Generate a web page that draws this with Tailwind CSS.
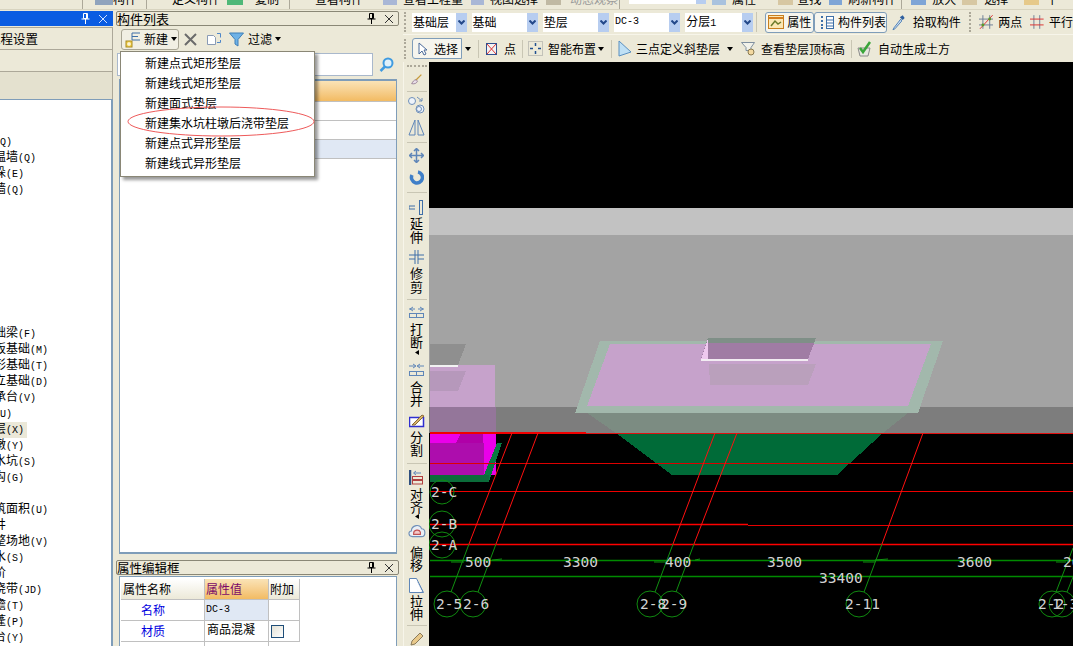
<!DOCTYPE html>
<html><head><meta charset="utf-8"><script src="https://cdn.jsdelivr.net/npm/@tailwindcss/browser@4"></script></head>
<body class="bg-[#ece9d8]">
<div class="relative w-[1073px] h-[646px] overflow-hidden flex flex-col bg-[#ece9d8] text-black text-[12px] leading-[16px] font-['Noto_Sans_CJK_SC',sans-serif]">

<!-- clipped top toolbar strip -->
<div class="h-[10px] shrink-0 flex items-start overflow-hidden border-b border-[#d8d4c0] text-[12px] leading-[12px] whitespace-nowrap">
  <div class="w-[83px] h-[9px] border-r border-[#aca899]"></div>
  <div class="ml-[12px] w-[18px] h-[5px] bg-[#8fa3bd]"></div>
  <span class="-mt-[7px]">构件</span>
  <div class="ml-[9px] w-px h-[9px] bg-[#aca899]"></div>
  <span class="ml-[25px] -mt-[7px]">定义构件</span>
  <div class="ml-[7px] w-[16px] h-[5px] bg-[#4fb878]"></div>
  <span class="ml-[12px] -mt-[7px]">复制</span>
  <div class="ml-[10px] w-px h-[9px] bg-[#aca899]"></div>
  <span class="ml-[25px] -mt-[7px]">查看构件</span>
  <div class="ml-[20px] w-[14px] h-[5px] bg-[#a9b7d6]"></div>
  <span class="ml-[6px] -mt-[7px]">查看工程量</span>
  <div class="ml-[8px] w-[13px] h-[5px] bg-[#a9b7d6]"></div>
  <span class="ml-[6px] -mt-[7px]">视图选择</span>
  <div class="ml-[8px] w-[15px] h-[5px] bg-[#c0b9a3]"></div>
  <span class="ml-[9px] -mt-[7px] text-[#9a9a9a]">动态观察</span>
  <div class="ml-[1px] w-px h-[9px] bg-[#aca899]"></div>
  <div class="ml-[9px] w-[67px] h-[4px] bg-white"></div>
  <div class="w-[10px] h-[4px] bg-[#b7cdf0]"></div>
  <div class="ml-[6px] w-[14px] h-[5px] bg-[#a9c2de]"></div>
  <span class="ml-[6px] -mt-[7px]">属性</span>
  <div class="ml-[22px] w-[15px] h-[5px] bg-[#d7c7a2]"></div>
  <span class="ml-[4px] -mt-[7px]">查找</span>
  <div class="ml-[8px] w-[13px] h-[5px] bg-[#7fa5d6]"></div>
  <span class="ml-[6px] -mt-[7px]">刷新构件</span>
  <div class="ml-[5px] w-px h-[9px] bg-[#aca899]"></div>
  <div class="ml-[9px] w-[15px] h-[5px] bg-[#7fa5d6]"></div>
  <span class="ml-[6px] -mt-[7px]">放大</span>
  <div class="ml-[6px] w-[15px] h-[5px] bg-[#d7c7a2]"></div>
  <span class="ml-[7px] -mt-[7px]">选择</span>
  <div class="ml-[16px] w-[15px] h-[5px] bg-[#e6c98a]"></div>
  <span class="ml-[7px] -mt-[7px]">平</span>
</div>

<div class="flex flex-1 min-h-0 pt-0">
  <!-- left panel -->
  <div class="w-[113px] flex flex-col shrink-0 overflow-hidden">
    <div class="mt-[1px] h-[15px] bg-[#0a5ce2] flex items-center justify-end gap-[9px] pr-[6px]">
      <svg width="9" height="11" viewBox="0 0 9 11" fill="none" stroke="#fff"><path d="M2.5.5h4v5h-4zM5.5 1v4M.5 6h8M4.5 6v5"/></svg>
      <svg width="8" height="8" viewBox="0 0 8 8" stroke="#cfe0ff"><path d="M0 0l8 8M8 0L0 8"/></svg>
    </div>
    <div class="h-[23px] mt-[1px] bg-[#ece9d8] border border-[#aca899] border-l-0 flex items-center whitespace-nowrap text-[12.5px]"><span class="-ml-[12px]">工程设置</span></div>
    <div class="h-[22px] bg-[#ece9d8] border-b border-r border-[#aca899] flex items-center whitespace-nowrap"><span class="-ml-[48px]">绘图输入</span></div>
    <div class="h-[27px] bg-[#e4e1cf] border-r border-[#aca899]"></div>
    <div class="flex-1 bg-white border-t border-r-2 border-[#7f9db9] overflow-hidden pt-[34px] whitespace-nowrap font-['Liberation_Mono','Noto_Sans_CJK_SC',monospace]">
      <div class="h-[16px] pl-[2px] -ml-[20px]">墙<span class="text-[10px]">(Q)</span></div>
      <div class="h-[16px] pl-[2px] -ml-[20px]">保温墙<span class="text-[10px]">(Q)</span></div>
      <div class="h-[16px] pl-[2px] -ml-[20px]">墙垛<span class="text-[10px]">(E)</span></div>
      <div class="h-[16px] pl-[2px] -ml-[20px]">幕墙<span class="text-[10px]">(Q)</span></div>
      <div class="h-[128px]"></div>
      <div class="h-[16px] pl-[2px] -ml-[20px]">基础梁<span class="text-[10px]">(F)</span></div>
      <div class="h-[16px] pl-[2px] -ml-[20px]">筏板基础<span class="text-[10px]">(M)</span></div>
      <div class="h-[16px] pl-[2px] -ml-[20px]">条形基础<span class="text-[10px]">(T)</span></div>
      <div class="h-[16px] pl-[2px] -ml-[20px]">独立基础<span class="text-[10px]">(D)</span></div>
      <div class="h-[16px] pl-[2px] -ml-[20px]">桩承台<span class="text-[10px]">(V)</span></div>
      <div class="h-[16px] pl-[2px] -ml-[20px]">桩<span class="text-[10px]">(U)</span></div>
      <div class="h-[16px] w-[47px] pl-[2px] -ml-[20px] bg-[#ebe8d8]">垫层<span class="text-[10px]">(X)</span></div>
      <div class="h-[16px] pl-[2px] -ml-[20px]">柱墩<span class="text-[10px]">(Y)</span></div>
      <div class="h-[16px] pl-[2px] -ml-[20px]">集水坑<span class="text-[10px]">(S)</span></div>
      <div class="h-[16px] pl-[2px] -ml-[20px]">地沟<span class="text-[10px]">(G)</span></div>
      <div class="h-[16px]"></div>
      <div class="h-[16px] pl-[2px] -ml-[20px]">建筑面积<span class="text-[10px]">(U)</span></div>
      <div class="h-[16px] pl-[2px] -ml-[20px]">天井</div>
      <div class="h-[16px] pl-[2px] -ml-[20px]">平整场地<span class="text-[10px]">(V)</span></div>
      <div class="h-[16px] pl-[2px] -ml-[20px]">散水<span class="text-[10px]">(S)</span></div>
      <div class="h-[16px] pl-[2px] -ml-[20px]">台阶</div>
      <div class="h-[16px] pl-[2px] -ml-[20px]">后浇带<span class="text-[10px]">(JD)</span></div>
      <div class="h-[16px] pl-[2px] -ml-[20px]">挑檐<span class="text-[10px]">(T)</span></div>
      <div class="h-[16px] pl-[2px] -ml-[20px]">雨蓬<span class="text-[10px]">(P)</span></div>
      <div class="h-[16px] pl-[2px] -ml-[20px]">阳台<span class="text-[10px]">(Y)</span></div>
    </div>
  </div>

  <!-- middle panel -->
  <div class="ml-[3px] w-[283px] shrink-0 flex flex-col">
    <div class="mt-[1px] h-[15px] border border-[#8a8776] rounded-[2px] flex items-center justify-between pr-[5px] text-[13px] whitespace-nowrap">
      <span>构件列表</span>
      <span class="flex items-center gap-[9px]">
        <svg width="9" height="11" viewBox="0 0 9 11" fill="none" stroke="#000"><path d="M2.5.5h4v5h-4zM5.5 1v4M.5 6h8M4.5 6v5"/></svg>
        <svg width="8" height="8" viewBox="0 0 8 8" stroke="#333"><path d="M0 0l8 8M8 0L0 8"/></svg>
      </span>
    </div>
    <div class="h-[26px] flex items-center pl-[5px]">
      <div class="h-[21px] w-[58px] border border-[#a8a594] rounded-[3px] flex items-center pl-[3px] bg-[#f1efe3]">
        <svg width="16" height="17" viewBox="0 0 16 17"><path d="M7 2v7M7 2h8M7 5.500h6M7 9h8" stroke="#3d6fa8" fill="none"/><rect x="1" y="10" width="6" height="6" fill="#f4d24e" stroke="#a88a20"/><path d="M4 11v4M2 13h4" stroke="#fff"/></svg>
        <span class="ml-[3px]">新建</span>
        <svg class="ml-[3px]" width="6" height="4" viewBox="0 0 6 4"><path d="M0 0h6L3 4z" fill="#000"/></svg>
      </div>
      <svg class="ml-[5px]" width="13" height="13" viewBox="0 0 13 13" stroke="#6b6b6b" stroke-width="2"><path d="M1 1l11 11M12 1L1 12"/></svg>
      <svg class="ml-[9px]" width="16" height="14" viewBox="0 0 16 14" fill="#fff" stroke="#8a9bb5"><path d="M1.500 3.500h6l2 2v7h-8z"/><path d="M11 1.500h3.500v4M14.500 8v2.500H11" stroke="#4f87c9" fill="none"/></svg>
      <svg class="ml-[7px]" width="15" height="15" viewBox="0 0 15 15"><path d="M.5 1h14L9 7.500V14l-3-2V7.500z" fill="#6fb2e6" stroke="#3f7fb8"/></svg>
      <span class="ml-[4px]">过滤</span>
      <svg class="ml-[3px]" width="6" height="4" viewBox="0 0 6 4"><path d="M0 0h6L3 4z" fill="#000"/></svg>
    </div>
    <div class="h-[25px] flex items-center pl-[1px]">
      <div class="w-[256px] h-[23px] bg-white border border-[#a9b8cc]"></div>
      <svg class="ml-[6px]" width="15" height="15" viewBox="0 0 15 15" fill="none" stroke="#3f9be0" stroke-width="2"><circle cx="9" cy="6" r="4.500" fill="#dff1fb"/><path d="M6 9.500L1.500 14" stroke-width="2.500"/></svg>
    </div>
    <div class="mt-[2px] ml-[3px] w-[278px] h-[475px] bg-white border-2 border-[#7f9db9] border-r border-l">
      <div class="h-[21px] bg-gradient-to-b from-[#fae3b6] to-[#f2bb62] border-b border-[#c0c0c0]"></div>
      <div class="h-[19px] border-b border-[#c0c0c0]"></div>
      <div class="h-[19px] border-b border-[#c0c0c0]"></div>
      <div class="h-[19px] bg-[#e0e8f4] border-b border-[#c0c0c0]"></div>
    </div>
    <div class="mt-[6px] h-[15px] border border-[#8a8776] rounded-[2px] flex items-center justify-between pr-[5px] text-[12.5px] whitespace-nowrap">
      <span>属性编辑框</span>
      <span class="flex items-center gap-[9px]">
        <svg width="9" height="11" viewBox="0 0 9 11" fill="none" stroke="#000"><path d="M2.5.5h4v5h-4zM5.5 1v4M.5 6h8M4.5 6v5"/></svg>
        <svg width="8" height="8" viewBox="0 0 8 8" stroke="#333"><path d="M0 0l8 8M8 0L0 8"/></svg>
      </span>
    </div>
    <div class="ml-[3px] mt-[1px] w-[278px] flex-1 bg-white border border-b-0 border-[#7f9db9] pl-[1px] pt-[2px] overflow-hidden">
      <div class="grid grid-cols-[84px_64px_31px] auto-rows-[21px] w-[179px]">
        <div class="bg-gradient-to-b from-white to-[#ece9d8] border-r border-b border-[#c0c0c0] flex items-center pl-[2px]">属性名称</div>
        <div class="bg-gradient-to-b from-[#fae3b6] to-[#f2bb62] border-r border-b border-[#c0c0c0] flex items-center pl-[1px] text-[#7a0a6a]">属性值</div>
        <div class="bg-gradient-to-b from-white to-[#ece9d8] border-r border-b border-[#c0c0c0] flex items-center pl-[1px]">附加</div>
        <div class="border-r border-b border-[#c0c0c0] flex items-center pl-[20px] text-[#0000e0]">名称</div>
        <div class="bg-[#e0e8f4] border-r border-b border-[#c0c0c0] flex items-center pl-[1px] text-[10px] font-['Liberation_Mono',monospace]">DC-3</div>
        <div class="border-r border-b border-[#c0c0c0]"></div>
        <div class="border-r border-b border-[#c0c0c0] flex items-center pl-[20px] text-[#0000e0]">材质</div>
        <div class="border-r border-b border-[#c0c0c0] pl-[2px] whitespace-nowrap overflow-hidden">商品混凝</div>
        <div class="border-r border-b border-[#c0c0c0] flex items-center pl-[2px]"><div class="w-[13px] h-[13px] border border-[#1f4e79] bg-gradient-to-br from-[#e4e2d6] to-white"></div></div>
        <div class="border-r border-[#c0c0c0]"></div>
        <div class="border-r border-[#c0c0c0]"></div>
        <div></div>
      </div>
    </div>
  </div>

  <!-- right column -->
  <div class="ml-[4px] flex-1 min-w-0 flex flex-col">
    <div class="h-[25px] flex items-center whitespace-nowrap border-b border-[#f7f5ea]">
      <div class="w-[3px] h-[20px] border-l-2 border-dotted border-[#aca899] ml-[1px]"></div>
      <div class="ml-[5px] w-[56px] h-[19px] bg-white flex items-center justify-between pl-[1px]">基础层<div class="w-[11px] h-[19px] bg-[#b7cdf0] flex items-center justify-center"><svg width="7" height="5" viewBox="0 0 7 5" fill="none" stroke="#24498a" stroke-width="2"><path d="M.5.5l3 3 3-3"/></svg></div></div>
      <div class="ml-[5px] w-[68px] h-[19px] bg-white flex items-center justify-between pl-[1px]">基础<div class="w-[11px] h-[19px] bg-[#b7cdf0] flex items-center justify-center"><svg width="7" height="5" viewBox="0 0 7 5" fill="none" stroke="#24498a" stroke-width="2"><path d="M.5.5l3 3 3-3"/></svg></div></div>
      <div class="ml-[5px] w-[68px] h-[19px] bg-white flex items-center justify-between pl-[1px]">垫层<div class="w-[11px] h-[19px] bg-[#b7cdf0] flex items-center justify-center"><svg width="7" height="5" viewBox="0 0 7 5" fill="none" stroke="#24498a" stroke-width="2"><path d="M.5.5l3 3 3-3"/></svg></div></div>
      <div class="ml-[5px] w-[68px] h-[19px] bg-white flex items-center justify-between pl-[1px]"><span class="text-[10px] font-['Liberation_Mono',monospace]">DC-3</span><div class="w-[11px] h-[19px] bg-[#b7cdf0] flex items-center justify-center"><svg width="7" height="5" viewBox="0 0 7 5" fill="none" stroke="#24498a" stroke-width="2"><path d="M.5.5l3 3 3-3"/></svg></div></div>
      <div class="ml-[5px] w-[70px] h-[19px] bg-white flex items-center justify-between pl-[1px]"><span>分层<span class="text-[10px] font-['Liberation_Mono',monospace]">1</span></span><div class="w-[11px] h-[19px] bg-[#b7cdf0] flex items-center justify-center"><svg width="7" height="5" viewBox="0 0 7 5" fill="none" stroke="#24498a" stroke-width="2"><path d="M.5.5l3 3 3-3"/></svg></div></div>
      <div class="ml-[3px] w-px h-[20px] bg-[#c9c6b4]"></div>
      <div class="ml-[8px] w-[50px] h-[21px] border border-[#7f9db9] rounded-[3px] bg-[#f6f5ee] flex items-center pl-[2px]">
        <svg width="16" height="16" viewBox="0 0 16 16"><rect x=".5" y="1.500" width="15" height="13" fill="#fbe7b4" stroke="#c77f1f"/><path d="M1 4h14" stroke="#d67f1f" stroke-width="2"/><path d="M3 12l4-5 3 3 3-2" stroke="#6b7a2a" fill="none" stroke-width="1.500"/></svg>
        <span class="ml-[3px]">属性</span>
      </div>
      <div class="w-[74px] h-[21px] border border-[#7f9db9] rounded-[3px] bg-[#f6f5ee] flex items-center pl-[5px]">
        <svg width="14" height="15" viewBox="0 0 14 15"><path d="M1 2h2M1 6h2M1 10h2M1 13h2" stroke="#3d6fa8" stroke-width="2"/><rect x="6.500" y="1.500" width="7" height="12" fill="#fff" stroke="#3d6fa8"/><path d="M7 5h6M7 8h6M7 11h6" stroke="#3d6fa8"/></svg>
        <span class="ml-[4px]">构件列表</span>
      </div>
      <svg class="ml-[5px]" width="14" height="17" viewBox="0 0 14 17"><path d="M9 5L2 14l-1 2 2-1 7-8z" fill="#cfe0f2" stroke="#4f7fb5"/><path d="M8 3l3 3 2-2-2-3z" fill="#2f5f9f"/></svg>
      <span class="ml-[7px]">拾取构件</span>
      <div class="ml-[8px] w-[3px] h-[20px] border-l-2 border-dotted border-[#aca899]"></div>
      <svg class="ml-[7px]" width="15" height="16" viewBox="0 0 15 16" fill="none"><path d="M4 1v14M11 1v14M0 5h15M0 11h15" stroke="#6f7f96"/><path d="M1 15L14 1" stroke="#d33"/><circle cx="4" cy="11" r="1.500" fill="#5a9a2a"/><circle cx="11" cy="5" r="1.500" fill="#5a9a2a"/></svg>
      <span class="ml-[5px]">两点</span>
      <svg class="ml-[8px]" width="14" height="14" viewBox="0 0 14 14" fill="none"><path d="M4 0v14M10 0v14" stroke="#6f7f96"/><path d="M0 4h14M0 10h14" stroke="#d33"/></svg>
      <span class="ml-[5px]">平行</span>
    </div>
    <div class="h-[27px] flex items-center whitespace-nowrap">
      <div class="w-[3px] h-[20px] border-l-2 border-dotted border-[#aca899] ml-[1px]"></div>
      <div class="ml-[5px] w-[50px] h-[21px] border border-[#7f9db9] rounded-l-[3px] bg-[#f6f5ee] flex items-center pl-[5px]">
        <svg width="9" height="14" viewBox="0 0 9 14"><path d="M1 1v11l3-3 2 4 2-1-2-4h3z" fill="#fff" stroke="#4a6a9a"/></svg>
        <span class="ml-[7px]">选择</span>
      </div>
      <svg class="ml-[3px]" width="6" height="4" viewBox="0 0 6 4"><path d="M0 0h6L3 4z" fill="#000"/></svg>
      <div class="ml-[7px] w-px h-[18px] bg-[#c9c6b4]"></div>
      <svg class="ml-[7px]" width="11" height="12" viewBox="0 0 11 12" fill="#f3f3f3" stroke="#2f4f8f"><rect x=".5" y=".5" width="10" height="11"/><path d="M1 1l9 10M10 1L1 11" stroke="#d33"/></svg>
      <span class="ml-[7px]">点</span>
      <div class="ml-[6px] w-px h-[18px] bg-[#c9c6b4]"></div>
      <svg class="ml-[5px]" width="15" height="15" viewBox="0 0 15 15" fill="none"><rect x=".5" y=".5" width="14" height="14" stroke="#9a9a9a" stroke-dasharray="1 1"/><path d="M7.500 2v3M7.500 10v3M2 7.500h3M10 7.500h3" stroke="#1f4f8f" stroke-width="1.500"/></svg>
      <span class="ml-[5px]">智能布置</span>
      <svg class="ml-[2px]" width="6" height="4" viewBox="0 0 6 4"><path d="M0 0h6L3 4z" fill="#000"/></svg>
      <div class="ml-[7px] w-px h-[18px] bg-[#c9c6b4]"></div>
      <svg class="ml-[5px]" width="15" height="17" viewBox="0 0 15 17"><path d="M2 1l12 11-12 4z" fill="#bfe0f5" stroke="#5a8fc0"/></svg>
      <span class="ml-[4px]">三点定义斜垫层</span>
      <svg class="ml-[7px]" width="6" height="4" viewBox="0 0 6 4"><path d="M0 0h6L3 4z" fill="#000"/></svg>
      <svg class="ml-[8px]" width="15" height="16" viewBox="0 0 15 16" fill="none"><path d="M.5 1.500h13L10 6.500v3H5v-3z" fill="#f2f2ea" stroke="#7f8f9f"/><circle cx="10" cy="11" r="3" fill="#f3d9a0" stroke="#8a7a50"/></svg>
      <span class="ml-[5px]">查看垫层顶标高</span>
      <div class="ml-[6px] w-px h-[18px] bg-[#c9c6b4]"></div>
      <svg class="ml-[5px]" width="15" height="16" viewBox="0 0 15 16" fill="none"><path d="M1 7h12l-2 8H3z" fill="#e8e8e0" stroke="#8a8a8a"/><path d="M3 7l3 4 7-10" stroke="#3aa53a" stroke-width="2.500"/></svg>
      <span class="ml-[6px]">自动生成土方</span>
    </div>

    <div class="flex-1 min-h-0 flex">
      <!-- vertical toolbar -->
      <div class="w-[26px] shrink-0 flex flex-col items-center overflow-hidden leading-[13px] text-[13px] border-l border-[#f7f5ea]">
        <div class="mt-[3px] w-[20px] h-[2px] border-t-2 border-dotted border-[#aca899]"></div>
        <svg class="mt-[7px]" width="17" height="17" viewBox="0 0 17 17"><path d="M16 1L7 10" stroke="#c79a3a" stroke-width="2"/><path d="M8 9c-4 0-5 3-7 6 5 1 8-1 9-4z" fill="#e9dfe9" stroke="#7a5a7a"/></svg>
        <div class="mt-[6px] w-[20px] h-px bg-[#c9c6b4] shrink-0"></div>
        <svg class="mt-[4px] shrink-0" width="18" height="18" viewBox="0 0 18 18" fill="#eef3fa" stroke="#6f8fb8"><circle cx="4" cy="5" r="3.500"/><circle cx="12" cy="13" r="4"/><circle cx="11" cy="13" r="2.500"/><path d="M9 1l5 4M14 2v3h-3" fill="none"/></svg>
        <svg class="mt-[5px] shrink-0" width="17" height="17" viewBox="0 0 17 17" fill="none" stroke="#5f86b8"><path d="M7 1L1 16h6zM10 1l6 15h-6z"/></svg>
        <div class="mt-[6px] w-[20px] h-px bg-[#c9c6b4] shrink-0"></div>
        <svg class="mt-[5px] shrink-0" width="15" height="15" viewBox="0 0 15 15" fill="none" stroke="#5f86b8" stroke-width="1.500"><path d="M7.500 0v15M0 7.500h15M5 3l2.500-2.500L10 3M5 12l2.500 2.500L10 12M3 5L.5 7.500 3 10M12 5l2.500 2.500L12 10"/></svg>
        <svg class="mt-[7px] shrink-0" width="15" height="15" viewBox="0 0 15 15" fill="none"><path d="M9 2a5.500 5.500 0 1 1-6 3" stroke="#3f7fc8" stroke-width="3.500"/></svg>
        <div class="mt-[7px] w-[20px] h-px bg-[#c9c6b4] shrink-0"></div>
        <svg class="mt-[7px] shrink-0" width="15" height="15" viewBox="0 0 15 15" fill="none" stroke="#3f6fa8"><path d="M10.500 0v15M13.500 0v15M10.500 .5h3M10.500 14.500h3M0 6h6M0 9h6M0 6v3" /></svg>
        <span class="mt-[1px] shrink-0">延</span><span class="shrink-0 mt-[1px]">伸</span>
        <svg class="mt-[7px] shrink-0" width="15" height="14" viewBox="0 0 15 14" fill="none" stroke="#3f6fa8"><path d="M6 0v14M9 0v14M0 5h15M0 9h6M9 9h6" /></svg>
        <span class="mt-[2px] shrink-0">修</span><span class="shrink-0 mt-[1px]">剪</span>
        <div class="mt-[6px] w-[20px] h-px bg-[#c9c6b4] shrink-0"></div>
        <svg class="mt-[6px] shrink-0" width="15" height="12" viewBox="0 0 15 12" fill="none" stroke="#5f86b8"><path d="M0 3h6M4 1L1 3l3 2M9 3h6M11 1l3 2-3 2"/><rect x=".5" y="7.500" width="14" height="4"/><path d="M7.500 7v5"/></svg>
        <span class="mt-[4px] shrink-0">打</span><span class="shrink-0 mt-[0px]">断</span>
        <svg class="mt-[2px] shrink-0" width="4" height="5" viewBox="0 0 4 5"><path d="M4 0v5L0 2.500z"/></svg>
        <svg class="mt-[8px] shrink-0" width="15" height="13" viewBox="0 0 15 13" fill="none" stroke="#5f86b8"><path d="M0 3h6M4 1l3 2-3 2M15 3H9M11 1L8 3l3 2"/><rect x=".5" y="8.500" width="14" height="4"/><path d="M7.500 8v5"/></svg>
        <span class="mt-[4px] shrink-0">合</span><span class="shrink-0">并</span>
        <svg class="mt-[8px] shrink-0" width="16" height="14" viewBox="0 0 16 14" fill="#fff" stroke="#2f2fd0"><rect x=".5" y="3.500" width="14" height="9" stroke-width="1.500"/><path d="M3 11L13 1l2 1L6 11z" fill="#d8b56a" stroke="#8a6a3a"/></svg>
        <span class="mt-[2px] shrink-0">分</span><span class="shrink-0">割</span>
        <div class="mt-[7px] w-[20px] h-px bg-[#c9c6b4] shrink-0"></div>
        <svg class="mt-[6px] shrink-0" width="15" height="15" viewBox="0 0 15 15" fill="none"><path d="M1 0v15" stroke="#2f4f7f" stroke-width="2.500"/><path d="M12 3H5M7 1L4.500 3 7 5" stroke="#5f86b8"/><rect x="3.500" y="6.500" width="10" height="3" stroke="#b04040"/><rect x="3.500" y="10.500" width="10" height="3.500" stroke="#b04040"/></svg>
        <span class="mt-[2px] shrink-0">对</span><span class="shrink-0">齐</span>
        <svg class="mt-[1px] shrink-0" width="4" height="5" viewBox="0 0 4 5"><path d="M4 0v5L0 2.500z"/></svg>
        <svg class="mt-[3px] shrink-0" width="18" height="18" viewBox="0 0 16 16" fill="#e9eef5" stroke="#6f8fb8"><path d="M4 13c-4 0-4-5-1-5 0-5 8-7 9-2 4 0 4 7 0 7z"/><path d="M5 10c0-3 5-4 6-1v2H5z" fill="#f4c8c8" stroke="#c05050"/></svg>
        <span class="mt-[5px] shrink-0">偏</span><span class="shrink-0">移</span>
        <svg class="mt-[7px] shrink-0" width="15" height="16" viewBox="0 0 15 16" fill="#fff" stroke="#5f86b8"><path d="M.5 .5h7l7 14H.5z"/><path d="M9 4l5 11" stroke-dasharray="1 1"/></svg>
        <span class="shrink-0">拉</span><span class="shrink-0">伸</span>
        <div class="mt-[5px] w-[20px] h-px bg-[#c9c6b4] shrink-0"></div>
        <svg class="mt-[6px] shrink-0" width="14" height="14" viewBox="0 0 14 14"><path d="M1 13l1-4 8-8 3 3-8 8z" fill="#e9c98a" stroke="#8a7a5a"/></svg>
      </div>

      <!-- 3D canvas -->
      <svg class="flex-1 min-w-0 block bg-black" viewBox="429 62 644 584" width="644" height="584" shape-rendering="crispEdges">
        <rect x="429" y="62" width="644" height="584" fill="#000"/>
        <rect x="429" y="208" width="644" height="27" fill="#c2c2c2"/>
        <rect x="429" y="235" width="644" height="172" fill="#a3a3a3"/>
        <rect x="429" y="407" width="644" height="26" fill="#7d7d7d"/>

        <!-- left block -->
        <path d="M430 344H466L458 365H430z" fill="#8f8f8f"/>
        <rect x="430" y="365" width="65" height="42" fill="#c6a2cb"/>
        <path d="M430 371H466L458 391H430z" fill="#b698bb"/>
        <rect x="430" y="407" width="66" height="26" fill="#94769a"/>
        <rect x="430" y="365" width="28" height="2" fill="#f2f2f2"/>
        <rect x="430" y="433" width="66" height="42" fill="#ea00ea"/>
        <path d="M430 443H484V475H430z" fill="#ad0dad"/>
        <path d="M461 433H483V443H456z" fill="#b000a8"/>
        <path d="M484 475L497 443H502L489 482H430V475z" fill="#087a42"/>
        <rect x="430" y="475" width="59" height="7" fill="#0b6c3a"/>

        <!-- pit -->
        <path d="M600 341H943L918 413H575z" fill="#a2b8ac"/>
        <path d="M610 344H931L908 406H587z" fill="#c6a2cb"/>
        <path d="M587 413H908L883 433H616z" fill="#7c8c82"/>
        <path d="M616 433H883L837 475H672z" fill="#006b38"/>
        <path d="M708 338H816L808 359H701z" fill="#a07ca4"/>
        <path d="M708 338H816L814 343H706z" fill="#7f8f87"/>
        <path d="M708 339L701 359H708z" fill="#eec8ee"/>
        <path d="M701 359H808V361H701z" fill="#f2ecf2"/>
        <path d="M709 364H816L808 385H710z" fill="#baa0bc"/>

        <g shape-rendering="auto" fill="none">
          <!-- horizontal red -->
          <path d="M430 433H586" stroke="#f00000" stroke-width="2"/>
          <path d="M586 433.500H1073" stroke="#e01010" stroke-width="1"/>
          <path d="M430 463.500H1073" stroke="#dd0000" stroke-width="1"/>
          <path d="M430 491.500H1073" stroke="#ee0000" stroke-width="1"/>
          <path d="M430 524.500H748" stroke="#ff0000" stroke-width="1.500"/>
          <path d="M748 525.500H1073" stroke="#e80000" stroke-width="1"/>
          <path d="M430 544.500H1073" stroke="#ff0000" stroke-width="1.500"/>
          <!-- horizontal green -->
          <path d="M430 560.500H1073M430 576.500H1073" stroke="#008a00" stroke-width="1.500"/>
          <!-- diagonals red -->
          <path d="M512 433L469 544M538 433L496 544M715 433L673 544M737 433L694 544M923 433L882 544" stroke="#ff1010"/>
          <!-- diagonals green -->
          <path d="M469 544L451 592M496 544L478 592M673 544L655 592M694 544L676 592M882 544L864 592M1073 548L1056 592M1073 577L1067 592" stroke="#109010"/>
          <path d="M451 562H464M492 560L502 559M654 562H667M695 560L700 559M863 562H875M875 560L888 559M1056 562H1066" stroke="#109010"/>
          <!-- bubbles -->
          <g stroke="#108a10">
            <circle cx="447" cy="604" r="13"/><circle cx="473" cy="604" r="13"/>
            <circle cx="650" cy="604" r="13"/><circle cx="672" cy="604" r="13"/>
            <circle cx="859" cy="604" r="13"/>
            <circle cx="1052" cy="604" r="13"/><circle cx="1062" cy="604" r="13"/>
            <circle cx="442" cy="492" r="12"/><circle cx="442" cy="524" r="13"/><circle cx="442" cy="545" r="13"/>
          </g>
        </g>
        <g shape-rendering="auto" fill="#d2d2d2" font-family="DejaVu Sans Mono, monospace" font-size="14.500px">
          <text x="431" y="497">2-C</text><text x="431" y="529">2-B</text><text x="431" y="550">2-A</text>
          <text x="465" y="567">500</text><text x="563" y="567">3300</text><text x="665" y="567">400</text>
          <text x="767" y="567">3500</text><text x="957" y="567">3600</text><text x="1063" y="567">20</text>
          <text x="819" y="583">33400</text>
          <text x="436" y="609">2-5</text><text x="463" y="609">2-6</text>
          <text x="640" y="609">2-8</text><text x="661" y="609">2-9</text>
          <text x="845" y="609">2-11</text><text x="1038" y="609">2-2</text><text x="1052" y="609">1-3</text>
        </g>
      </svg>
    </div>
  </div>
</div>

<!-- dropdown menu -->
<div class="absolute left-[120px] top-[51px] w-[195px] h-[126px] bg-white border border-[#8a8776] shadow-[3px_3px_3px_rgba(0,0,0,0.4)] pt-[1px] pl-[24px] whitespace-nowrap leading-[20px]">
  <div class="h-[20px]">新建点式矩形垫层</div>
  <div class="h-[20px]">新建线式矩形垫层</div>
  <div class="h-[20px]">新建面式垫层</div>
  <div class="h-[20px]">新建集水坑柱墩后浇带垫层</div>
  <div class="h-[20px]">新建点式异形垫层</div>
  <div class="h-[20px]">新建线式异形垫层</div>
</div>
<!-- red annotation ellipse -->
<svg class="absolute left-[126px] top-[105px]" width="192" height="33" viewBox="0 0 192 33" fill="none"><ellipse cx="95" cy="16.500" rx="93" ry="14.500" stroke="#ee5a5a"/></svg>
</div>
</body></html>
